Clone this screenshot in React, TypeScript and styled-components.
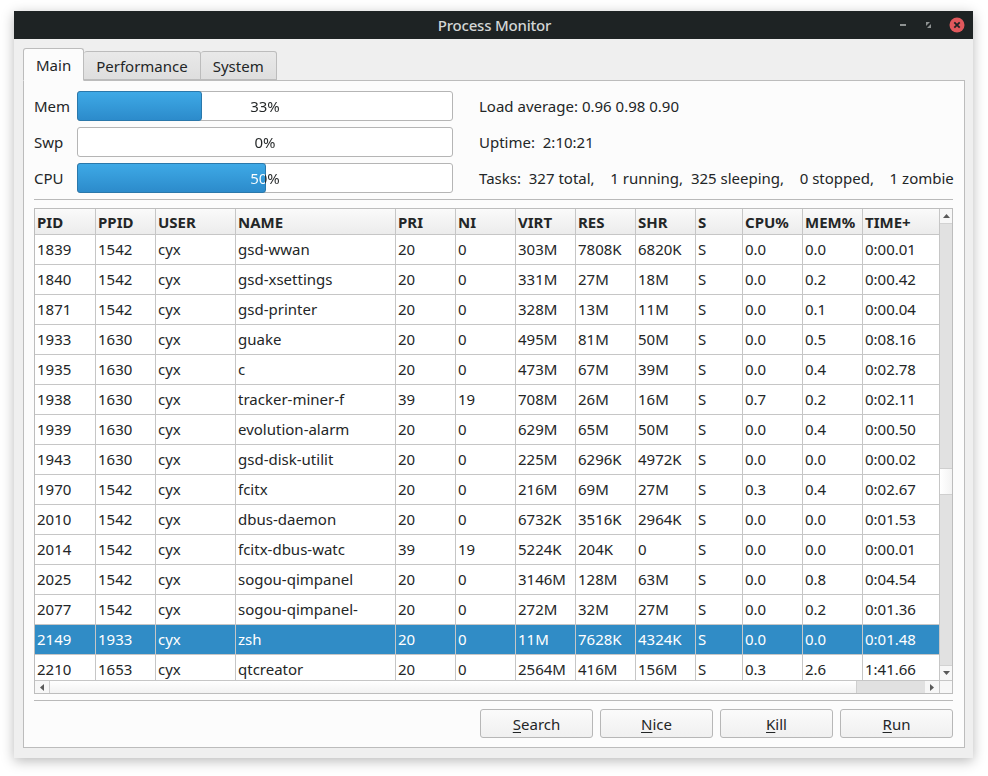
import React from "react";
import styled, { createGlobalStyle } from "styled-components";

const Global = createGlobalStyle`
  html, body { margin: 0; padding: 0; background: #ffffff; }
  body { font-family: "Noto Sans", "DejaVu Sans", sans-serif; font-size: 15px; color: #232627; }
  * { box-sizing: border-box; }
`;

const Page = styled.div`
  padding: 11px 0 0 14px;
  width: 988px;
  height: 776px;
`;

const Window = styled.div`
  width: 959px;
  height: 747px;
  background: #efefef;
  display: flex;
  flex-direction: column;
  box-shadow: 0 3px 12px rgba(0, 0, 0, 0.28);
`;

const TitleBar = styled.div`
  height: 28px;
  background: #1e2324;
  display: flex;
  align-items: center;
  position: relative;
  flex-shrink: 0;
`;

const Title = styled.div`
  flex: 1;
  text-align: center;
  color: #d3d6d6;
  font-size: 15px;
  font-weight: 500;
  letter-spacing: -0.2px;
  padding-left: 2px;
`;

const TitleButtons = styled.div`
  position: absolute;
  right: 8px;
  top: 0;
  height: 28px;
  display: flex;
  align-items: center;
  gap: 17px;
`;

const Body = styled.div`
  flex: 1;
  display: flex;
  flex-direction: column;
  padding: 9px 8px 10px 9px;
  min-height: 0;
`;

const TabBar = styled.div`
  display: flex;
  align-items: flex-end;
  height: 33px;
  margin-bottom: -1px;
  position: relative;
  z-index: 1;
`;

const Tab = styled.div<{ $active?: boolean; $first?: boolean }>`
  height: ${(p) => (p.$active ? 33 : 29)}px;
  padding: 0 12px 0 12px;
  padding-top: ${(p) => (p.$active ? 1 : 0)}px;
  display: flex;
  align-items: center;
  font-size: 15px;
  color: #232627;
  background: ${(p) => (p.$active ? "#fcfcfc" : "linear-gradient(#e9e9e9, #dedede)")};
  border: 1px solid #bcbcbc;
  border-bottom: ${(p) => (p.$active ? "1px solid #fcfcfc" : "1px solid #bcbcbc")};
  border-left: ${(p) => (p.$first || p.$active ? "1px solid #bcbcbc" : "none")};
  border-radius: 3px 3px 0 0;
  margin-bottom: ${(p) => (p.$active ? 0 : 1)}px;
`;

const Pane = styled.div`
  flex: 1;
  background: #fcfcfc;
  border: 1px solid #bcbcbc;
  padding: 10px 11px 9px 10px;
  display: flex;
  flex-direction: column;
  min-height: 0;
`;

const TopSection = styled.div`
  display: grid;
  grid-template-columns: 43px 376px 1fr;
  grid-auto-rows: 30px;
  row-gap: 6px;
  align-items: center;
`;

const MeterLabel = styled.div`
  font-size: 15px;
`;

const Meter = styled.div`
  position: relative;
  height: 30px;
  border: 1px solid #b5b5b5;
  border-radius: 3px;
  background: #ffffff;
`;

const MeterFill = styled.div`
  position: absolute;
  left: -1px;
  top: -1px;
  bottom: -1px;
  background: linear-gradient(#3ea9e6, #2c8bcb);
  border: 1px solid #2a78ab;
  border-radius: 3px;
`;

const MeterText = styled.div`
  position: relative;
  height: 28px;
  display: flex;
  align-items: center;
  justify-content: center;
  font-size: 15px;
  color: transparent;
  -webkit-background-clip: text;
  background-clip: text;
`;

const Info = styled.div`
  padding-left: 26px;
  white-space: pre;
  font-size: 15px;
`;

const Separator = styled.div<{ $top: number; $bottom: number }>`
  height: 1px;
  background: #b9b9b9;
  margin-top: ${(p) => p.$top}px;
  margin-bottom: ${(p) => p.$bottom}px;
  flex-shrink: 0;
`;

const TableFrame = styled.div`
  height: 486px;
  border: 1px solid #bdbdbd;
  display: grid;
  grid-template-columns: 1fr 13px;
  grid-template-rows: 1fr 13px;
  background: #ffffff;
  flex-shrink: 0;
`;

const Cells = styled.div`
  overflow: hidden;
`;

const Row = styled.div<{ $header?: boolean; $selected?: boolean }>`
  display: flex;
  height: ${(p) => (p.$header ? 26 : 30)}px;
  border-bottom: 1px solid #c6c6c6;
  background: ${(p) =>
    p.$header ? "linear-gradient(#fafafa, #ececec)" : p.$selected ? "#308cc6" : "#ffffff"};
  color: ${(p) => (p.$selected ? "#ffffff" : "#232627")};
  font-weight: ${(p) => (p.$header ? 700 : 400)};
  width: 920px;
`;

const Cell = styled.div<{ $w: number; $header?: boolean }>`
  width: ${(p) => p.$w}px;
  flex-shrink: 0;
  border-right: 1px solid #c6c6c6;
  padding-left: 2px;
  padding-bottom: ${(p) => (p.$header ? 0 : 1)}px;
  display: flex;
  align-items: center;
  white-space: nowrap;
  overflow: hidden;
  font-size: 15px;
`;

const VScroll = styled.div`
  border-left: 1px solid #c6c6c6;
  background: #e1e1e1;
  display: flex;
  flex-direction: column;
`;

const ArrowBox = styled.div`
  width: 12px;
  height: 14px;
  background: #f7f7f7;
  display: flex;
  align-items: center;
  justify-content: center;
  flex-shrink: 0;
`;

const HArrowBox = styled.div`
  width: 14px;
  height: 12px;
  background: #f7f7f7;
  display: flex;
  align-items: center;
  justify-content: center;
  flex-shrink: 0;
`;

const VTrack = styled.div`
  flex: 1;
  display: flex;
  flex-direction: column;
  border-top: 1px solid #d2d2d2;
  border-bottom: 1px solid #d2d2d2;
`;

const VHandle = styled.div`
  height: 27px;
  margin-top: 244px;
  background: linear-gradient(90deg, #ffffff, #f3f3f3);
  border-top: 1px solid #cfcfcf;
  border-bottom: 1px solid #cfcfcf;
`;

const HScroll = styled.div`
  border-top: 1px solid #c6c6c6;
  background: #e1e1e1;
  display: flex;
`;

const HHandle = styled.div`
  width: 808px;
  background: linear-gradient(#ffffff, #f2f2f2);
  border-left: 1px solid #cfcfcf;
  border-right: 1px solid #cfcfcf;
`;

const HTrack = styled.div`
  flex: 1;
`;

const Corner = styled.div`
  border-top: 1px solid #c6c6c6;
  border-left: 1px solid #c6c6c6;
  background: #f7f7f7;
`;

const ButtonRow = styled.div`
  display: flex;
  justify-content: flex-end;
  gap: 7px;
`;

const Button = styled.button`
  width: 113px;
  height: 29px;
  border: 1px solid #b7b7b7;
  border-radius: 3px;
  background: linear-gradient(#fbfbfb, #f0f0f0);
  font-family: "Noto Sans", "DejaVu Sans", sans-serif;
  font-size: 15px;
  color: #232627;
  padding: 0;
  cursor: default;
  u { text-decoration: underline; text-underline-offset: 2px; }
`;

const cols: { key: string; w: number }[] = [
  { key: "PID", w: 61 },
  { key: "PPID", w: 60 },
  { key: "USER", w: 80 },
  { key: "NAME", w: 160 },
  { key: "PRI", w: 60 },
  { key: "NI", w: 60 },
  { key: "VIRT", w: 60 },
  { key: "RES", w: 60 },
  { key: "SHR", w: 60 },
  { key: "S", w: 47 },
  { key: "CPU%", w: 60 },
  { key: "MEM%", w: 60 },
  { key: "TIME+", w: 78 },
];

const data = [
  "1839 1542 cyx gsd-wwan 20 0 303M 7808K 6820K S 0.0 0.0 0:00.01",
  "1840 1542 cyx gsd-xsettings 20 0 331M 27M 18M S 0.0 0.2 0:00.42",
  "1871 1542 cyx gsd-printer 20 0 328M 13M 11M S 0.0 0.1 0:00.04",
  "1933 1630 cyx guake 20 0 495M 81M 50M S 0.0 0.5 0:08.16",
  "1935 1630 cyx c 20 0 473M 67M 39M S 0.0 0.4 0:02.78",
  "1938 1630 cyx tracker-miner-f 39 19 708M 26M 16M S 0.7 0.2 0:02.11",
  "1939 1630 cyx evolution-alarm 20 0 629M 65M 50M S 0.0 0.4 0:00.50",
  "1943 1630 cyx gsd-disk-utilit 20 0 225M 6296K 4972K S 0.0 0.0 0:00.02",
  "1970 1542 cyx fcitx 20 0 216M 69M 27M S 0.3 0.4 0:02.67",
  "2010 1542 cyx dbus-daemon 20 0 6732K 3516K 2964K S 0.0 0.0 0:01.53",
  "2014 1542 cyx fcitx-dbus-watc 39 19 5224K 204K 0 S 0.0 0.0 0:00.01",
  "2025 1542 cyx sogou-qimpanel 20 0 3146M 128M 63M S 0.0 0.8 0:04.54",
  "2077 1542 cyx sogou-qimpanel- 20 0 272M 32M 27M S 0.0 0.2 0:01.36",
  "2149 1933 cyx zsh 20 0 11M 7628K 4324K S 0.0 0.0 0:01.48",
  "2210 1653 cyx qtcreator 20 0 2564M 416M 156M S 0.3 2.6 1:41.66",
].map((l) => l.split(" "));

const Tri = ({ dir }: { dir: "up" | "down" | "left" | "right" }) => {
  const pts = {
    up: "0,4 3.5,0 7,4",
    down: "0,0 7,0 3.5,4",
    left: "4,0 4,7 0,3.5",
    right: "0,0 4,3.5 0,7",
  }[dir];
  const vertical = dir === "up" || dir === "down";
  return (
    <svg width={vertical ? 7 : 4} height={vertical ? 4 : 7} viewBox={vertical ? "0 0 7 4" : "0 0 4 7"}>
      <polygon points={pts} fill="#5a5a5a" />
    </svg>
  );
};

function ProgressMeter({ value }: { value: number }) {
  const fillPx = Math.round((value / 100) * 376);
  const textBg = `linear-gradient(90deg, #ffffff 0px, #ffffff ${fillPx - 1}px, #232627 ${fillPx - 1}px, #232627 100%)`;
  return (
    <Meter>
      {value > 0 && <MeterFill style={{ width: `${fillPx + 1}px` }} />}
      <MeterText style={{ backgroundImage: textBg }}>{value}%</MeterText>
    </Meter>
  );
}

export default function App() {
  return (
    <Page>
      <Global />
      <Window>
        <TitleBar>
          <Title>Process Monitor</Title>
          <TitleButtons>
            <svg width="8" height="8" viewBox="0 0 8 8">
              <rect x="1" y="3" width="6" height="2" fill="#8e9292" />
            </svg>
            <svg width="8" height="8" viewBox="0 0 8 8">
              <polygon points="2,1 6,1 2,5" fill="#8e9292" />
              <polygon points="7,3 7,7 3,7" fill="#8e9292" />
            </svg>
            <svg width="16" height="16" viewBox="0 0 16 16">
              <circle cx="8" cy="8" r="7.5" fill="#e0585c" />
              <path d="M5.3 5.3 L10.7 10.7 M10.7 5.3 L5.3 10.7" stroke="#1e2324" strokeWidth="1.8" />
            </svg>
          </TitleButtons>
        </TitleBar>
        <Body>
          <TabBar>
            <Tab $active $first>Main</Tab>
            <Tab>Performance</Tab>
            <Tab>System</Tab>
          </TabBar>
          <Pane>
            <TopSection>
              <MeterLabel>Mem</MeterLabel>
              <ProgressMeter value={33} />
              <Info>Load average: 0.96 0.98 0.90</Info>
              <MeterLabel>Swp</MeterLabel>
              <ProgressMeter value={0} />
              <Info>Uptime:  2:10:21</Info>
              <MeterLabel>CPU</MeterLabel>
              <ProgressMeter value={50} />
              <Info>{"Tasks:  327 total,    1 running,  325 sleeping,    0 stopped,    1 zombie"}</Info>
            </TopSection>
            <Separator $top={6} $bottom={8} />
            <TableFrame>
              <Cells>
                <Row $header>
                  {cols.map((c) => (
                    <Cell key={c.key} $w={c.w} $header>
                      {c.key}
                    </Cell>
                  ))}
                </Row>
                {data.map((r) => (
                  <Row key={r[0]} $selected={r[0] === "2149"}>
                    {r.map((v, i) => (
                      <Cell key={i} $w={cols[i].w}>
                        {v}
                      </Cell>
                    ))}
                  </Row>
                ))}
              </Cells>
              <VScroll>
                <ArrowBox>
                  <Tri dir="up" />
                </ArrowBox>
                <VTrack>
                  <VHandle />
                </VTrack>
                <ArrowBox>
                  <Tri dir="down" />
                </ArrowBox>
              </VScroll>
              <HScroll>
                <HArrowBox>
                  <Tri dir="left" />
                </HArrowBox>
                <HHandle />
                <HTrack />
                <HArrowBox>
                  <Tri dir="right" />
                </HArrowBox>
              </HScroll>
              <Corner />
            </TableFrame>
            <Separator $top={6} $bottom={8} />
            <ButtonRow>
              <Button>
                <u>S</u>earch
              </Button>
              <Button>
                <u>N</u>ice
              </Button>
              <Button>
                <u>K</u>ill
              </Button>
              <Button>
                <u>R</u>un
              </Button>
            </ButtonRow>
          </Pane>
        </Body>
      </Window>
    </Page>
  );
}
